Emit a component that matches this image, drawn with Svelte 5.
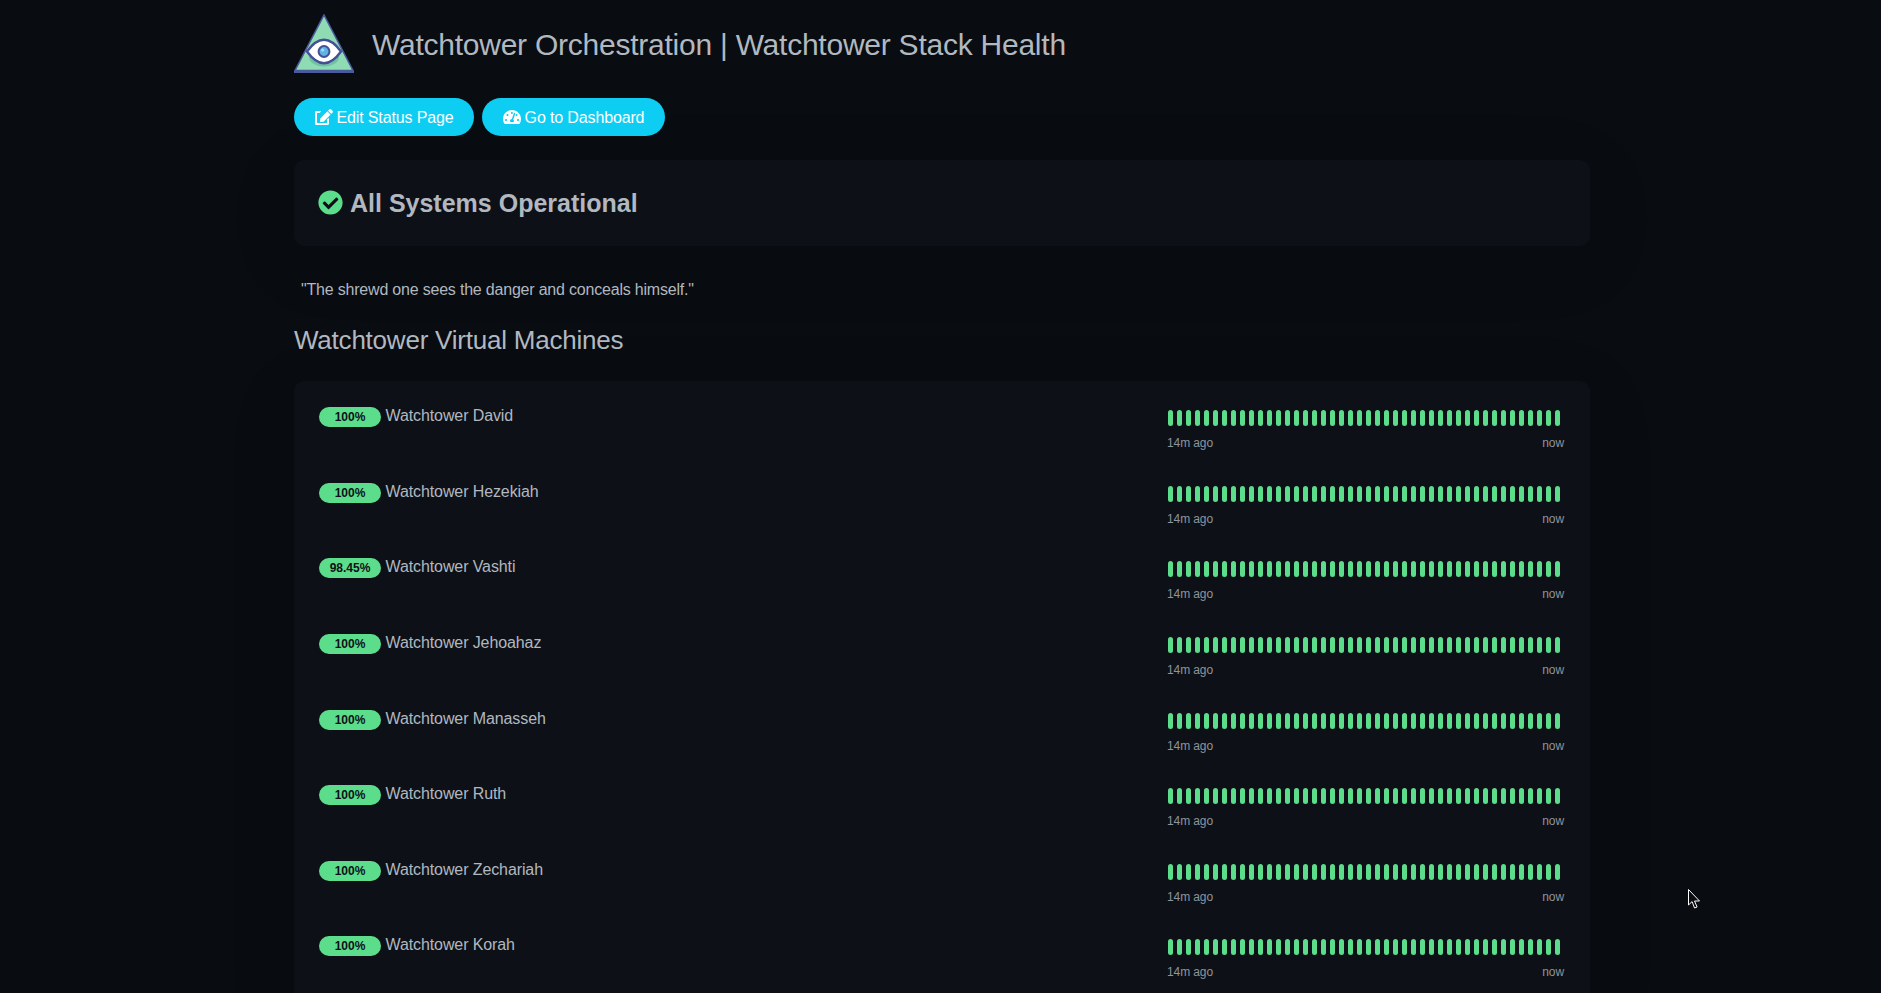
<script>
  const monitors = [
    { name: "Watchtower David", uptime: "100%" },
    { name: "Watchtower Hezekiah", uptime: "100%" },
    { name: "Watchtower Vashti", uptime: "98.45%" },
    { name: "Watchtower Jehoahaz", uptime: "100%" },
    { name: "Watchtower Manasseh", uptime: "100%" },
    { name: "Watchtower Ruth", uptime: "100%" },
    { name: "Watchtower Zechariah", uptime: "100%" },
    { name: "Watchtower Korah", uptime: "100%" }
  ];

  const beats = Array.from({ length: 44 });
</script>

<main class="page">
  <div class="container">
    <header class="title-row">
      <svg class="logo" viewBox="0 0 60 60" aria-hidden="true">
        <path d="M30 1 59 56.5H1Z" fill="#8edbb4" stroke="#4a5a9c" stroke-width="1.6" stroke-linejoin="miter" />
        <rect x="0" y="56.5" width="60" height="2.5" fill="#4a5a9c" />
        <ellipse cx="30" cy="43" rx="15" ry="9.5" fill="#70c2a2" />
        <path d="M13 37.5Q30 14 47 37.5Q30 61 13 37.5Z" fill="#fff" stroke="#444f96" stroke-width="2.4" />
        <circle cx="30" cy="37.5" r="6.4" fill="#444f96" />
        <circle cx="30" cy="37.5" r="4.4" fill="#5fb3e4" />
        <circle cx="28.6" cy="35.9" r="1.5" fill="#a9dcf5" />
      </svg>
      <h1>Watchtower Orchestration | Watchtower Stack Health</h1>
    </header>

    <div class="actions">
      <button type="button">
        <svg viewBox="0 0 576 512" class="icon-btn" aria-hidden="true"><path d="M402.6 83.2l90.2 90.2c3.8 3.8 3.8 10 0 13.8L274.4 405.6l-92.8 10.3c-12.4 1.4-22.9-9.1-21.5-21.5l10.3-92.8L388.8 83.2c3.8-3.8 10-3.8 13.8 0zm162-22.9l-48.8-48.8c-15.2-15.2-39.9-15.2-55.2 0l-35.4 35.4c-3.8 3.8-3.8 10 0 13.8l90.2 90.2c3.8 3.8 10 3.8 13.8 0l35.4-35.4c15.2-15.3 15.2-40 0-55.2zM384 346.2V448H64V128h73.1c3.2 0 6.2-1.3 8.5-3.5l40-40c7.6-7.6 2.2-20.5-8.5-20.5H48C21.5 64 0 85.5 0 112v352c0 26.5 21.5 48 48 48h352c26.5 0 48-21.5 48-48V306.2c0-10.7-12.9-16-20.5-8.5l-40 40c-2.2 2.3-3.5 5.3-3.5 8.5z" /></svg>
        <span>Edit Status Page</span>
      </button>
      <button type="button">
        <svg viewBox="0 0 576 512" class="icon-btn" aria-hidden="true"><path d="M288 32C128.94 32 0 160.94 0 320c0 52.8 14.25 102.26 39.06 144.8 5.61 9.62 16.3 15.2 27.44 15.2h443c11.14 0 21.83-5.58 27.44-15.2C561.75 422.26 576 372.8 576 320c0-159.06-128.94-288-288-288zm0 64c14.71 0 26.58 10.13 30.32 23.65-1.11 2.26-2.64 4.23-3.45 6.67l-9.22 27.67c-5.13 3.49-10.97 6.01-17.64 6.01-17.67 0-32-14.33-32-32S270.33 96 288 96zM96 384c-17.67 0-32-14.33-32-32s14.33-32 32-32 32 14.33 32 32-14.33 32-32 32zm48-160c-17.67 0-32-14.33-32-32s14.33-32 32-32 32 14.33 32 32-14.33 32-32 32zm246.77-72.41l-61.33 184C343.13 347.33 352 364.54 352 384c0 11.72-3.38 22.55-8.88 32H232.88c-5.5-9.45-8.88-20.28-8.88-32 0-33.94 26.5-61.43 59.9-63.59l61.34-184.01c4.17-12.56 17.73-19.45 30.36-15.17 12.57 4.19 19.35 17.79 15.17 30.36zm14.66 57.2l15.52-46.55c3.47-1.29 7.13-2.23 11.05-2.23 17.67 0 32 14.33 32 32s-14.33 32-32 32c-11.38-.01-20.89-6.28-26.57-15.22zM480 384c-17.67 0-32-14.33-32-32s14.33-32 32-32 32 14.33 32 32-14.33 32-32 32z" /></svg>
        <span>Go to Dashboard</span>
      </button>
    </div>

    <section class="card overall">
      <svg viewBox="0 0 512 512" class="icon-check" aria-hidden="true"><path d="M504 256c0 136.967-111.033 248-248 248S8 392.967 8 256 119.033 8 256 8s248 111.033 248 248zM227.314 387.314l184-184c6.248-6.248 6.248-16.379 0-22.627l-22.627-22.627c-6.248-6.249-16.379-6.249-22.628 0L216 308.118l-70.059-70.059c-6.248-6.248-16.379-6.248-22.628 0l-22.627 22.627c-6.248 6.248-6.248 16.379 0 22.627l104 104c6.249 6.249 16.379 6.249 22.628.001z" /></svg>
      <span>All Systems Operational</span>
    </section>

    <p class="quote">"The shrewd one sees the danger and conceals himself."</p>

    <h2>Watchtower Virtual Machines</h2>

    <section class="card list">
      {#each monitors as monitor}
        <div class="item">
          <div class="info">
            <span class="badge">{monitor.uptime}</span>
            <span class="name">{monitor.name}</span>
          </div>
          <div class="heartbeat">
            <div class="beats">
              {#each beats as _}
                <span class="beat"></span>
              {/each}
            </div>
            <div class="times">
              <span>14m ago</span>
              <span>now</span>
            </div>
          </div>
        </div>
      {/each}
    </section>
  </div>

  <svg class="cursor" viewBox="0 0 12 20" aria-hidden="true">
    <path d="M.5.5V16l3.6-3.4 2.4 6.4 2.6-1-2.6-6h5Z" fill="#0a0c10" stroke="#fff" stroke-width="1" />
  </svg>
</main>

<style>
  :global(body) {
    margin: 0;
    background: #090c10;
    overflow: hidden;
  }

  .page {
    position: relative;
    height: 100vh;
    overflow: hidden;
    color: #b1b8c0;
    font-family: "Liberation Sans", Arial, sans-serif;
    font-size: 16px;
    line-height: 1.5;
  }

  .container {
    box-sizing: border-box;
    width: 1296px;
    margin-left: 294px;
  }

  .title-row {
    display: flex;
    align-items: center;
    gap: 18px;
    padding-top: 14px;
    height: 60px;
  }

  .logo {
    width: 60px;
    height: 60px;
    flex: 0 0 auto;
  }

  h1 {
    margin: 2px 0 0;
    font-size: 30px;
    font-weight: 400;
    line-height: 1.2;
    letter-spacing: -0.24px;
  }

  .actions {
    display: flex;
    gap: 8px;
    margin-top: 24px;
  }

  button {
    display: flex;
    align-items: center;
    gap: 4px;
    height: 38px;
    width: 180px;
    justify-content: center;
    padding: 0;
    border: 0;
    border-radius: 19px;
    background: #0dcdf3;
    color: #fff;
    font: inherit;
    letter-spacing: -0.14px;
  }

  button span {
    position: relative;
    top: 1px;
  }

  button + button {
    width: 183px;
  }

  .icon-btn {
    width: 18px;
    height: 16px;
    fill: #fff;
  }

  .card {
    background: #0d1117;
    border-radius: 10px;
    box-shadow: 0 15px 70px rgba(0, 0, 0, 0.1);
  }

  .overall {
    display: flex;
    align-items: center;
    gap: 7px;
    height: 86px;
    margin-top: 24px;
    padding: 0 24px;
    font-size: 25px;
    font-weight: 700;
  }

  .overall span {
    padding-top: 2px;
  }

  .icon-check {
    width: 25px;
    height: 25px;
    margin-top: -1px;
    fill: #5cdd8b;
  }

  .quote {
    margin: 32px 0 0 7px;
    letter-spacing: -0.2px;
  }

  h2 {
    margin: 23px 0 0;
    font-size: 26px;
    font-weight: 400;
    line-height: 1.2;
    letter-spacing: -0.22px;
  }

  .list {
    margin-top: 24.6px;
    padding: 13px 25px;
  }

  .item {
    display: flex;
    justify-content: space-between;
    height: 75.6px;
    box-sizing: border-box;
    padding-top: 10.4px;
  }

  .info {
    display: flex;
    align-items: flex-start;
    gap: 4.5px;
  }

  .name {
    letter-spacing: -0.1px;
  }

  .badge {
    box-sizing: border-box;
    width: 62px;
    height: 20px;
    margin-top: 3px;
    border-radius: 10px;
    background: #5cdd8b;
    color: #0d1117;
    font-size: 12px;
    font-weight: 700;
    line-height: 20px;
    text-align: center;
  }

  .heartbeat {
    width: 397px;
    margin-right: 1px;
  }

  .beats {
    display: flex;
    gap: 4px;
    height: 16px;
    margin: 6px 0 0 1px;
  }

  .beat {
    width: 5px;
    height: 16px;
    border-radius: 3px;
    background: #5cdd8b;
  }

  .times {
    display: flex;
    justify-content: space-between;
    margin-top: 8px;
    font-size: 12px;
    line-height: 18px;
    color: #8e949c;
    letter-spacing: -0.1px;
  }

  .cursor {
    position: absolute;
    left: 1688px;
    top: 889px;
    width: 12px;
    height: 20px;
  }
</style>
